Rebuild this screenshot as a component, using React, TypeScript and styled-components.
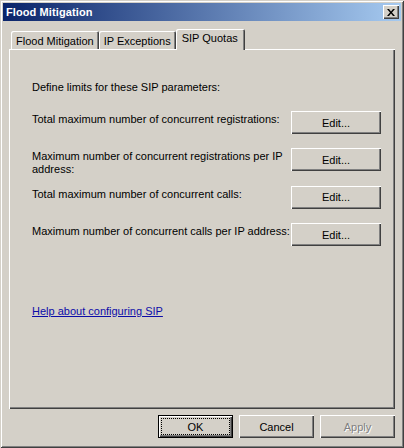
import React from 'react';
import styled, { createGlobalStyle } from 'styled-components';

const GlobalStyle = createGlobalStyle`
  html, body {
    margin: 0;
    padding: 0;
    background: #d4d0c8;
  }
  * {
    box-sizing: border-box;
  }
`;

const rows = [
  { lines: ['Total maximum number of concurrent registrations:'] },
  { lines: ['Maximum number of concurrent registrations per IP', 'address:'] },
  { lines: ['Total maximum number of concurrent calls:'] },
  { lines: ['Maximum number of concurrent calls per IP address:'] },
];

const App = () => {
  return (
    <>
      <GlobalStyle />
      <Window>
        <TitleBar>
          <Title>Flood Mitigation</Title>
          <CloseButton aria-label="Close">
            <svg width="8" height="7" viewBox="0 0 8 7">
              <path d="M0 0h2l2 2.5L6 0h2L5 3.5 8 7H6L4 4.5 2 7H0l3-3.5z" fill="#000" />
            </svg>
          </CloseButton>
        </TitleBar>
        <Body>
          <TabRow>
            <Tab>Flood Mitigation</Tab>
            <Tab>IP Exceptions</Tab>
            <Tab $active>SIP Quotas</Tab>
          </TabRow>
          <Panel>
            <Intro>Define limits for these SIP parameters:</Intro>
            {rows.map((r) => (
              <Row key={r.lines[0]}>
                <RowLabel>
                  {r.lines.map((l) => (
                    <div key={l}>{l}</div>
                  ))}
                </RowLabel>
                <Button $wide>Edit...</Button>
              </Row>
            ))}
            <HelpLink href="#">Help about configuring SIP</HelpLink>
          </Panel>
          <Footer>
            <Button $default>
              <Focus>OK</Focus>
            </Button>
            <Button>Cancel</Button>
            <Button $disabled>Apply</Button>
          </Footer>
        </Body>
      </Window>
    </>
  );
};

export default App;

const Window = styled.div`
  width: 404px;
  height: 448px;
  background: #d4d0c8;
  padding: 3px;
  display: flex;
  flex-direction: column;
  font-family: 'Liberation Sans', Arial, sans-serif;
  font-size: 11px;
  color: #000;
  box-shadow: inset 1px 1px #d4d0c8, inset -1px -1px #404040, inset 2px 2px #ffffff,
    inset -2px -2px #808080;
`;

const TitleBar = styled.div`
  height: 18px;
  display: flex;
  align-items: center;
  justify-content: space-between;
  padding: 0 2px 0 3px;
  background: linear-gradient(to right, #0a246a, #a6caf0);
`;

const Title = styled.div`
  color: #fff;
  font-weight: 700;
  font-size: 11px;
  letter-spacing: 0.1px;
`;

const CloseButton = styled.div`
  width: 16px;
  height: 14px;
  background: #d4d0c8;
  display: flex;
  align-items: center;
  justify-content: center;
  box-shadow: inset 1px 1px #ffffff, inset -1px -1px #404040, inset -2px -2px #808080;
`;

const Body = styled.div`
  flex: 1;
  display: flex;
  flex-direction: column;
  padding: 8px 6px 7px 6px;
`;

const TabRow = styled.div`
  height: 20px;
  display: flex;
  align-items: flex-end;
  padding-left: 2px;
  position: relative;
  z-index: 1;
`;

const Tab = styled.div<{ $active?: boolean }>`
  height: ${(p) => (p.$active ? '21px' : '18px')};
  margin-bottom: ${(p) => (p.$active ? '-1px' : '0')};
  padding: ${(p) => (p.$active ? '3px 7px 0 6px' : '4px 5px 0 5px')};
  background: #d4d0c8;
  white-space: nowrap;
  box-shadow: inset 1px 1px #ffffff, inset -1px 0 #404040, inset -2px 0 #808080;
  border-radius: 2px 2px 0 0;
`;

const Panel = styled.div`
  height: 360px;
  display: flex;
  flex-direction: column;
  padding: 32px 14px 0 23px;
  box-shadow: inset 1px 1px #ffffff, inset -1px -1px #404040, inset -2px -2px #808080;
`;

const Intro = styled.div`
  line-height: 13px;
  margin-bottom: 17px;
`;

const Row = styled.div`
  height: 37.4px;
  display: flex;
  align-items: flex-start;
  justify-content: space-between;
`;

const RowLabel = styled.div`
  line-height: 13px;
  padding-top: 2px;
  white-space: nowrap;
`;

const HelpLink = styled.a`
  margin-top: 44px;
  color: #0c0ca8;
  text-decoration: underline;
  line-height: 13px;
  align-self: flex-start;
`;

const Footer = styled.div`
  display: flex;
  justify-content: flex-end;
  gap: 6px;
  margin-top: 6px;
`;

const Button = styled.div<{ $wide?: boolean; $default?: boolean; $disabled?: boolean }>`
  width: ${(p) => (p.$wide ? '90px' : '75px')};
  height: 23px;
  flex-shrink: 0;
  display: flex;
  align-items: center;
  justify-content: center;
  background: #d4d0c8;
  padding: ${(p) => (p.$default ? '3px' : '0')};
  color: ${(p) => (p.$disabled ? '#808080' : '#000')};
  text-shadow: ${(p) => (p.$disabled ? '1px 1px #ffffff' : 'none')};
  box-shadow: ${(p) =>
    p.$default
      ? 'inset 0 0 0 1px #000, inset 2px 2px #ffffff, inset -2px -2px #404040, inset -3px -3px #808080'
      : 'inset 1px 1px #ffffff, inset -1px -1px #404040, inset -2px -2px #808080'};
`;

const Focus = styled.div`
  width: 100%;
  height: 100%;
  display: flex;
  align-items: center;
  justify-content: center;
  border: 1px dotted #000;
`;
